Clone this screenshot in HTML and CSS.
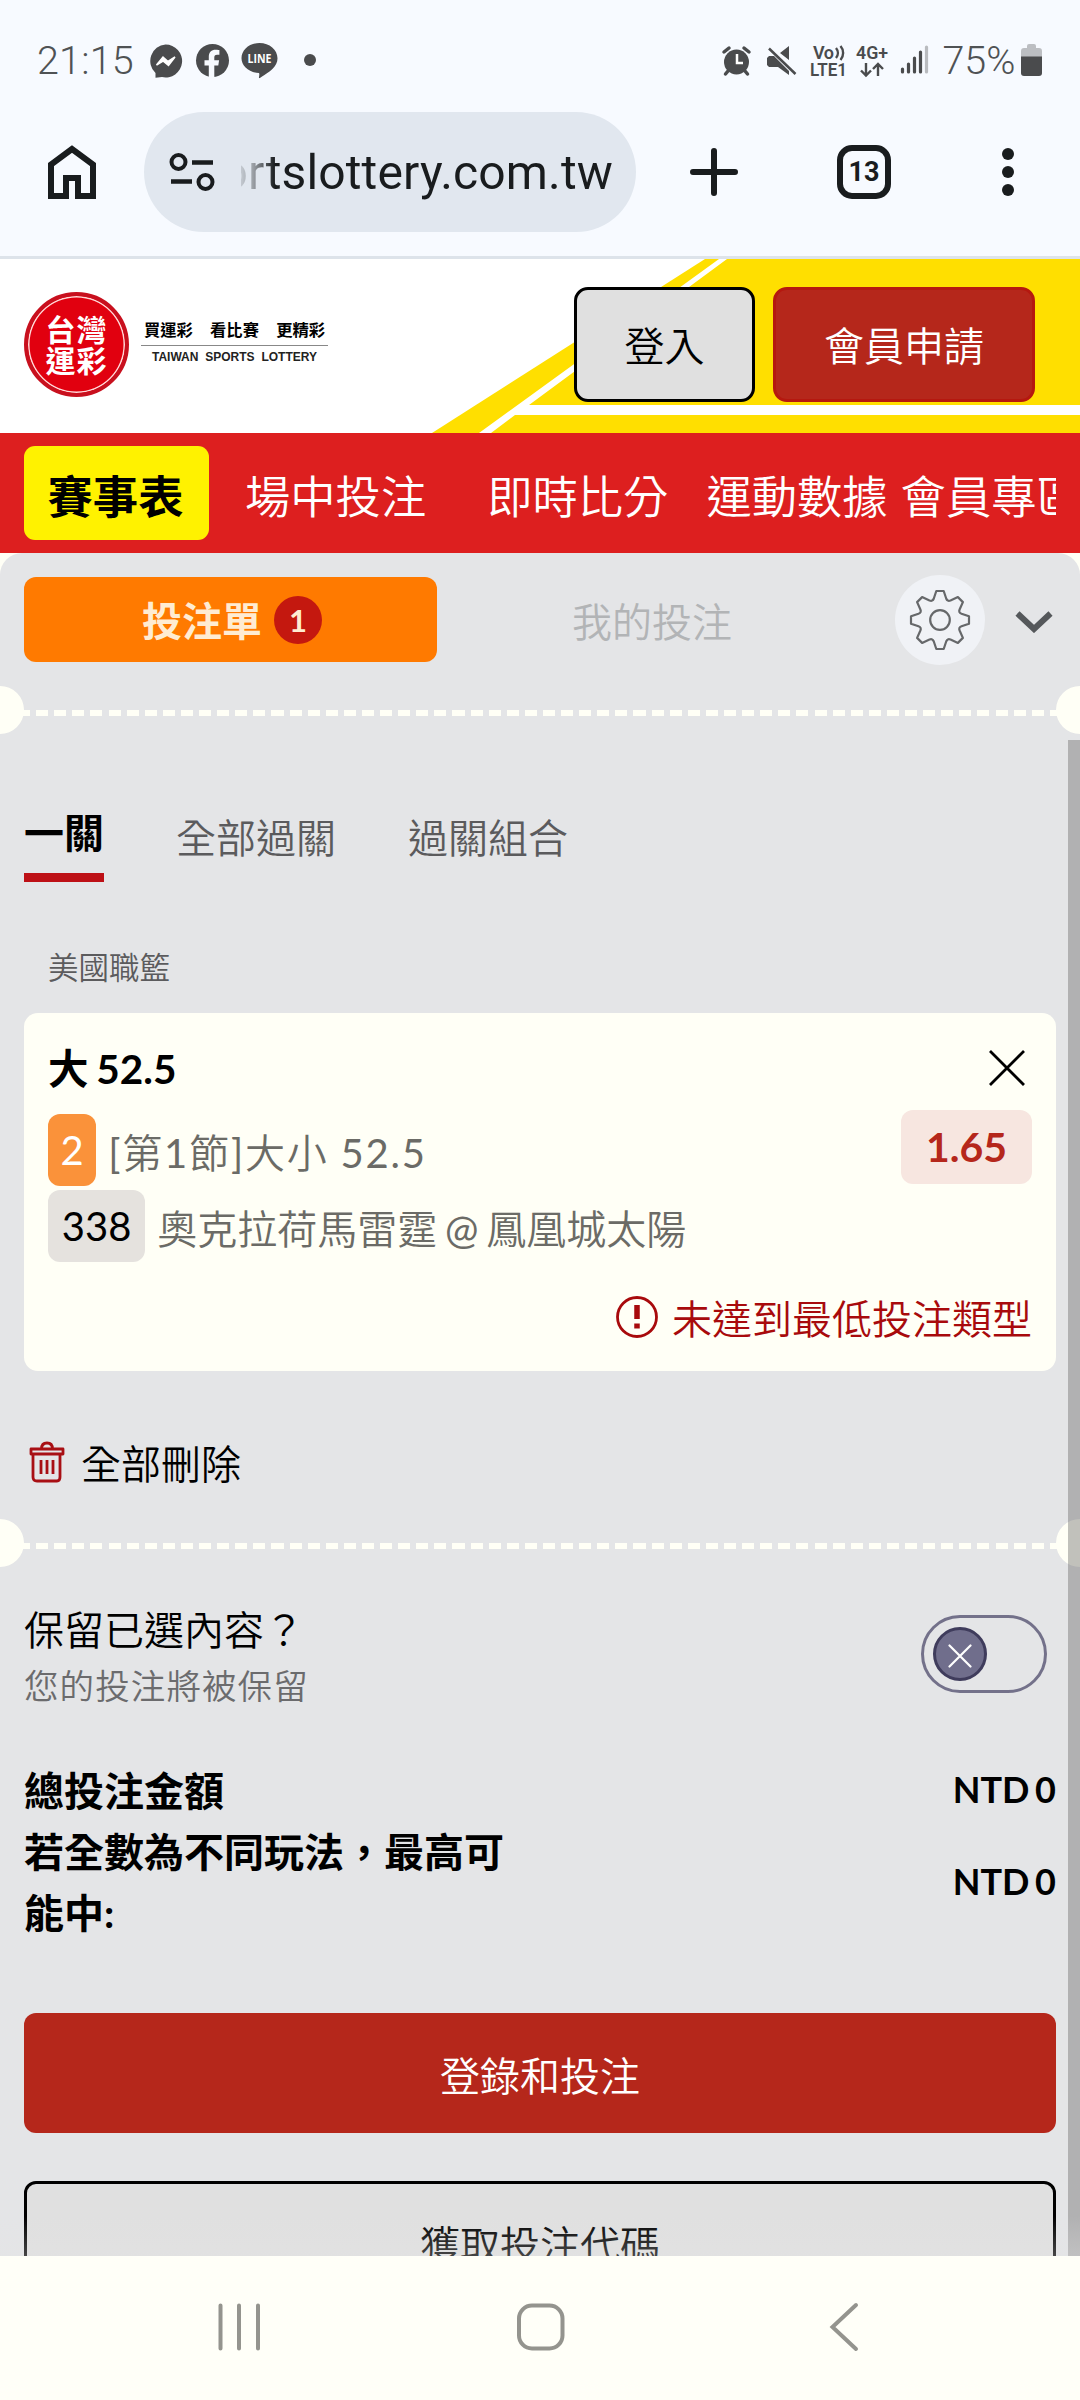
FILE: index.html
```html
<!DOCTYPE html>
<html lang="zh-Hant">
<head>
<meta charset="utf-8">
<title>台灣運彩</title>
<link rel="stylesheet" href="styles.css">
</head>
<body>
<div class="status">
  <span class="clock">21:15</span>
  <svg class="app-icons" width="180" height="40" viewBox="145 40 180 40">
    <g fill="#4a4b4d">
      <path d="M166.500 44.500a16.500 16.500 0 1 1-3.500 32.600l-6.500.6v-4.700a16.500 16.500 0 0 1 10-28.500z"/>
      <circle cx="213.500" cy="60.500" r="16.500"/>
      <path d="M260.500 43c10 0 18 6.800 18 15.200 0 4-1.800 7.400-4.600 10.300-4 4-10.400 7.700-13 9.500-1.300.5-1-.5-.8-1.500.2-1.300.5-3-.2-3.400-9.800-.8-17.400-7-17.400-14.900 0-8.400 8-15.200 18-15.200z"/>
      <circle cx="311" cy="60" r="6"/>
    </g>
    <path d="M157.500 65l6.500-8 5 4.500 7-4.500-6.500 8.500-5.500-4.500z" fill="#fff" stroke="#fff" stroke-width="1.500"/>
    <path d="M209.800 78V65.500h-4.300v-5.200h4.300v-3.500c0-4.600 2.700-7 6.800-7 2 0 3.800.3 3.800.3v4.600h-2.300c-2.200 0-2.800 1.300-2.800 2.700v2.900h4.800l-.8 5.200h-4V78z" fill="#f7faff"/>
    <text x="260.500" y="63" class="line-text" textLength="24" lengthAdjust="spacingAndGlyphs">LINE</text>
  </svg>
  <svg class="signal-icons" width="212" height="40" viewBox="720 40 212 40">
    <g fill="#4a4b4d">
      <circle cx="737.500" cy="62" r="12.500"/>
      <g stroke="#4a4b4d" stroke-width="3.500" stroke-linecap="round" fill="none">
        <path d="M725 52l5-4M745 48l5 4M729 71l-2.500 3M746 71l2.500 3"/>
      </g>
      <path d="M768 58l2-2h5l15 15v4l-11-8h-9l-2-2zM781 53l9-7v14z"/>
      <path d="M770 48.500l26.500 25.500" stroke="#4a4b4d" stroke-width="2.500"/>
    </g>
    <path d="M738 54v9h6" fill="none" stroke="#fff" stroke-width="2.500"/>
    <g class="net-text">
      <text x="814" y="58.500" textLength="21">Vo</text>
      <text x="811" y="75.500" textLength="37" lengthAdjust="spacingAndGlyphs">LTE1</text>
      <text x="857" y="58.500" textLength="32" lengthAdjust="spacingAndGlyphs">4G+</text>
    </g>
    <g fill="none" stroke="#4a4b4d" stroke-width="2.400">
      <path d="M837 48c2.500 3 2.500 7 0 10M841.500 46c3.500 4 3.500 10 0 14M867 63v12M862 70.500l5 5 5-5M879 76V64M874 69l5-5 5 5"/>
    </g>
    <g stroke="#4a4b4d" stroke-width="3.200" stroke-linecap="round">
      <path d="M903.500 69v3M909.500 64v8M915.500 58v14M921.500 52v20"/>
      <path d="M927.500 47v25" stroke="#b9bbbf"/>
    </g>
  </svg>
  <span class="percent">75%</span>
  <svg class="battery" width="22" height="32" viewBox="0 0 22 32">
    <path d="M6 2q0-2 2-2h5q2 0 2 2v2h3q3 0 3 3v6H0V7q0-3 3-3h3z" fill="#bcbec2"/>
    <path d="M0 12.500h21V29q0 3-3 3H3q-3 0-3-3z" fill="#4a4b4d"/>
  </svg>
</div>

<div class="toolbar">
  <svg class="home" width="48" height="54" viewBox="0 0 48 54"><path d="M24 4L3 19.500V51h15V33h12v18h15V19.500zM18 51h3M27 51h3" fill="none" stroke="#191c1e" stroke-width="6"/></svg>
  <div class="url">
    <svg width="46" height="40" viewBox="169 152 46 40"><g fill="none" stroke="#191c1e"><circle cx="178.500" cy="162" r="7" stroke-width="4"/><circle cx="205.500" cy="182" r="7" stroke-width="4"/><path d="M192 162.500h21M171 181.500h21" stroke-width="4.500"/></g></svg>
    <div class="url-clip"><span class="url-text">ortslottery.com.tw</span></div>
  </div>
  <svg class="plus" width="48" height="48" viewBox="0 0 48 48"><path d="M24 3v42M3 24h42" stroke="#191c1e" stroke-width="6" stroke-linecap="round"/></svg>
  <div class="tab-count">13</div>
  <svg class="kebab" width="12" height="48" viewBox="0 0 12 48"><g fill="#191c1e"><circle cx="6" cy="6" r="6"/><circle cx="6" cy="24" r="6"/><circle cx="6" cy="42" r="6"/></g></svg>
</div>

<header class="brand">
  <svg class="brand-bg" width="1080" height="174" viewBox="0 259 1080 174">
    <path d="M432 433L705 259H1080V433z" fill="#ffdf00"/>
    <path d="M479 433L719 259H727L529 405H1080V415H515L491 433z" fill="#fff"/>
  </svg>
  <div class="seal"><div class="seal-text"><span>台灣</span><span>運彩</span></div></div>
  <div class="slogan">
    <div class="slogan-zh"><span>買運彩</span><span>看比賽</span><span>更精彩</span></div>
    <div class="slogan-en">TAIWAN SPORTS LOTTERY</div>
  </div>
  <div class="brand-actions">
    <div class="btn-login">登入</div>
    <div class="btn-join">會員申請</div>
  </div>
</header>

<nav class="nav">
  <div class="nav-clip">
    <span class="nav-active">賽事表</span><span class="nav-a">場中投注</span><span class="nav-b">即時比分</span><span class="nav-c">運動數據</span><span class="nav-d">會員專區</span>
  </div>
</nav>

<main class="stage">
  <div class="panel">
    <div class="slip-head">
      <div class="slip-tab">投注單<span class="badge">1</span></div>
      <div class="my-bets">我的投注</div>
      <div class="gear">
        <svg width="64" height="64" viewBox="-32 -32 64 64"><g fill="none" stroke="#66686a" stroke-width="2.200" stroke-linejoin="round"><circle r="9.800"/>
        <path d="M-3.700-29H3.700L6.200-21.500Q7.400-18.300 10.500-19.600L17.900-22.900 22.900-17.900 19.600-10.500Q18.300-7.400 21.500-6.200L29-3.700V3.700L21.500 6.200Q18.300 7.400 19.600 10.500L22.900 17.900 17.900 22.900 10.500 19.600Q7.400 18.300 6.200 21.500L3.700 29H-3.700L-6.200 21.500Q-7.400 18.300-10.500 19.600L-17.900 22.900-22.900 17.900-19.600 10.500Q-18.300 7.400-21.500 6.200L-29 3.700V-3.700L-21.500-6.200Q-18.300-7.400-19.600-10.500L-22.900-17.900-17.900-22.900-10.500-19.600Q-7.400-18.300-6.200-21.500z"/></g></svg>
      </div>
      <svg class="chevron" width="38" height="22" viewBox="0 0 38 22"><path d="M2.500 2.500L19 18 35.500 2.500" fill="none" stroke="#55585b" stroke-width="6"/></svg>
    </div>

    <div class="tear"></div>

    <div class="tabs"><span class="tab-on">一關</span><span class="tab">全部過關</span><span class="tab">過關組合</span></div>
    <div class="league">美國職籃</div>

    <section class="card">
      <div class="card-main">
        <div class="pick">大 52.5</div>
        <div class="row"><span class="tag tag-orange">2</span><span class="market"><span class="num">[</span>第<span class="num">1</span>節<span class="num">]</span>大小<span class="num"> 52.5</span></span></div>
        <div class="row row-2"><span class="tag tag-gray">338</span><span class="match">奧克拉荷馬雷霆<span class="num"> @ </span>鳳凰城太陽</span></div>
      </div>
      <div class="card-side">
        <svg class="close" width="38" height="38" viewBox="0 0 38 38"><path d="M2 2l34 34M36 2L2 36" stroke="#000" stroke-width="2.800"/></svg>
        <div class="odds">1.65</div>
      </div>
      <div class="warn">
        <svg width="44" height="44" viewBox="0 0 44 44"><circle cx="22" cy="22" r="19.500" fill="none" stroke="#a80a0c" stroke-width="2.800"/><path d="M22 10v14M22 28.500v5" stroke="#a80a0c" stroke-width="5.500"/></svg>
        <span>未達到最低投注類型</span>
      </div>
    </section>

    <div class="clear">
      <svg width="36" height="42" viewBox="0 0 36 42"><g fill="none" stroke="#a80f14" stroke-width="2.800" stroke-linejoin="round"><path d="M2 8h32v5H2zM12.500 8Q12.500 2 18 2T23.500 8M4 13v23q0 4 4 4h20q3 0 3-4V13M12 19v14M18 19v14M24 19v14"/></g></svg>
      <span>全部刪除</span>
    </div>

    <div class="tear"></div>

    <div class="keep">
      <div class="keep-text"><div class="keep-title">保留已選內容？</div><div class="keep-note">您的投注將被保留</div></div>
      <div class="toggle"><div class="knob"><svg width="24" height="24" viewBox="0 0 24 24"><path d="M1.500 1.500l21 21M22.500 1.500l-21 21" stroke="#fff" stroke-width="2.200" stroke-linecap="round"/></svg></div></div>
    </div>

    <div class="sum"><div class="sum-label">總投注金額</div><div class="sum-value">NTD 0</div></div>
    <div class="sum"><div class="sum-label">若全數為不同玩法，最高可能中:</div><div class="sum-value">NTD 0</div></div>

    <div class="btn-bet">登錄和投注</div>
    <div class="btn-code">獲取投注代碼</div>
    <div class="scrollbar"></div>
    <div class="fade"></div>
  </div>
</main>

<footer class="sysnav">
  <svg width="1080" height="144" viewBox="0 2256 1080 144"><g fill="none" stroke="#94948e" stroke-width="4" stroke-linecap="round"><path d="M220.500 2305.500v43M239 2305.500v43M258 2305.500v43"/><rect x="519" y="2305.500" width="43.500" height="43" rx="13"/><path d="M856 2305l-23.500 22 23.500 22"/></g></svg>
</footer>
</body>
</html>
```
FILE: styles.css
```css
* { box-sizing: border-box; }
body { margin: 0; width: 1080px; height: 2400px; overflow: hidden; background: #fffff6; color: #000; font-family: Lato, "Noto Sans CJK TC", sans-serif; font-size: 40px; font-weight: 350; white-space: nowrap; }
svg { display: block; flex: none; }

.status { height: 112px; background: #f7faff; display: flex; align-items: flex-start; padding: 0 37px; font-family: Roboto, sans-serif; color: #4f5254; }
.clock, .percent { font-size: 39.5px; line-height: 46px; margin-top: 38px; }
.clock { width: 108px; letter-spacing: 0.2px; }
.app-icons { margin-top: 40px; }
.line-text { font: 700 11.5px "Open Sans", sans-serif; fill: #fff; text-anchor: middle; }
.signal-icons { margin: 40px 0 0 395px; }
.net-text { font: 600 18px Roboto, sans-serif; fill: #4a4b4d; }
.percent { width: 90px; padding-left: 11px; }
.battery { margin-top: 44px; }

.toolbar { height: 147px; background: #f7faff; border-bottom: 3px solid #dde3ea; display: flex; align-items: flex-start; padding-left: 48px; }
.home { margin-top: 33px; }
.url { margin-left: 48px; width: 492px; height: 120px; border-radius: 60px; background: #e1e7ef; display: flex; align-items: center; padding-left: 25px; }
.url-clip { margin-left: 26px; width: 375px; height: 80px; overflow: hidden; display: flex; justify-content: flex-end; -webkit-mask-image: linear-gradient(90deg, rgba(0,0,0,0.15) 0, rgba(0,0,0,0.35) 12px, #000 34px); mask-image: linear-gradient(90deg, rgba(0,0,0,0.15) 0, rgba(0,0,0,0.35) 12px, #000 34px); }
.url-text { font: 400 48px/82px Roboto, sans-serif; color: #191c1e; letter-spacing: 0.150px; margin-right: 3px; }
.plus { margin: 36px 0 0 54px; }
.tab-count { margin: 33px 0 0 99px; width: 54px; height: 54px; border: 6px solid #191c1e; border-radius: 15px; font: 700 27px/42px Roboto, sans-serif; text-align: center; color: #191c1e; }
.kebab { margin: 36px 0 0 111px; }

.brand { position: relative; height: 174px; background: #fff; display: flex; align-items: flex-start; }
.brand-bg { position: absolute; left: 0; top: 0; }
.seal { position: relative; margin: 33px 0 0 24px; width: 105px; height: 105px; border-radius: 50%; background: #e1000f; border: 4px solid #c8101e; display: flex; align-items: center; justify-content: center; box-shadow: inset 0 0 0 1.500px #ffd9d9; }
.seal-text { font: 700 30px/30px Lato, "Noto Sans CJK TC", sans-serif; letter-spacing: 1px; color: #fff; display: flex; flex-direction: column; gap: 1px; }
.seal-text span { height: 30px; }
.slogan { position: relative; margin: 60px 0 0 12px; width: 187px; }
.slogan-zh { display: flex; justify-content: space-between; padding: 0 3px; height: 27px; border-bottom: 1.500px solid #888; font-size: 16.300px; font-weight: 700; line-height: 22px; }
.slogan-en { font: 700 12px/22px "Liberation Sans", sans-serif; text-align: center; color: #222; word-spacing: 3.500px; }
.brand-actions { position: relative; display: flex; gap: 18px; margin: 28px 0 0 246px; line-height: 113px; text-align: center; }
.btn-login { width: 181px; height: 115px; border: 3px solid #000; border-radius: 14px; background: #e0e0e0; }
.btn-join { width: 262px; height: 115px; border: 3px solid #b5180f; border-radius: 14px; background: #b5271b; color: #fff; }

.nav { height: 120px; background: #dd1f1f; padding: 13px 24px; color: #fff; font-size: 45.3px; }
.nav-clip { display: flex; overflow: hidden; height: 94px; line-height: 102px; }
.nav-clip span { flex: none; }
.nav-active { width: 185px; height: 94px; border-radius: 11px; background: #fff200; color: #000; font-weight: 700; text-align: center; padding-right: 2px; }
.nav-a { margin-left: 36px; }
.nav-b { margin-left: 61px; }
.nav-c { margin-left: 38px; }
.nav-d { margin-left: 13px; }

.stage { height: 1703px; overflow: hidden; }
.panel { position: relative; height: 1860px; background: #e4e5e7; border-radius: 22px 22px 0 0; }
.slip-head { display: flex; height: 133px; align-items: flex-start; padding: 22px 27px 0 24px; }
.slip-tab { width: 413px; height: 85px; margin-top: 2px; border-radius: 12px; background: #ff7a00; color: #ffecd2; font-weight: 700; display: flex; align-items: center; justify-content: center; line-height: 89px; padding: 4px 0 0 3px; }
.badge { width: 48px; height: 48px; margin: -4px 0 0 12px; border-radius: 50%; background: #c4180f; font-size: 31px; line-height: 48px; text-align: center; }
.my-bets { width: 458px; padding-left: 135px; line-height: 94px; color: #b2b4b6; }
.gear { width: 90px; height: 90px; border-radius: 50%; background: #f0f2f6; display: flex; align-items: center; justify-content: center; }
.chevron { margin: 36px 0 0 30px; }

.tear { position: relative; height: 48px; overflow: hidden; background: repeating-linear-gradient(90deg, #fffff6 0 12px, transparent 12px 18.100px) 0 24px / 100% 6px no-repeat; }
.tear::before, .tear::after { content: ""; position: absolute; top: 0; width: 48px; height: 48px; border-radius: 50%; background: #fffff6; }
.tear::before { left: -24px; }
.tear::after { right: -24px; }

.tabs { display: flex; gap: 72px; padding: 74px 24px 0; height: 182px; color: #5b5b5d; line-height: 60px; }
.tab-on { height: 74px; border-bottom: 9px solid #bd1016; color: #000; font-weight: 700; line-height: 51px; }
.league { padding-left: 48px; margin-top: 26px; height: 71px; font-size: 30.500px; line-height: 50px; color: #5b5b5d; }

.card { margin: 0 24px; height: 358px; border-radius: 14px; background: #fffff6; padding: 0 24px; display: grid; grid-template: 249px 109px / 1fr auto; }
.pick { margin-top: 31px; height: 70px; line-height: 50px; font-weight: 700; font-size: 40.5px; word-spacing: -2px; }
.row { display: flex; align-items: center; gap: 12px; height: 72px; color: #6b6b66; }
.row-2 { margin-top: 4px; }
.num { font-weight: 400; }
.tag { border-radius: 12px; height: 72px; padding: 0 12.500px; line-height: 72px; font-weight: 400; }
.tag-orange { background: #fa923a; color: #fff; }
.tag-gray { background: #e5e2de; color: #000; padding: 0 13.800px; }
.market { letter-spacing: 1.800px; line-height: 78px; height: 72px; }
.match { line-height: 78px; height: 72px; word-spacing: -2.500px; }
.card-side { display: flex; flex-direction: column; align-items: flex-end; }
.close { margin: 36px 6px 0 0; }
.odds { margin-top: 23px; width: 131px; height: 74px; border-radius: 12px; background: #f7e6e0; color: #b5271b; font-weight: 700; font-size: 41px; line-height: 74px; text-align: center; }
.warn { grid-column: 1 / 3; display: flex; justify-content: flex-end; gap: 13px; color: #a80a0c; padding-top: 33px; line-height: 48px; }

.clear { display: flex; gap: 16px; padding: 70px 0 0 29px; height: 148px; line-height: 46px; }

.keep { display: flex; justify-content: space-between; padding: 33px 33px 0 24px; height: 194px; }
.keep-title { line-height: 60px; }
.keep-note { font-size: 34.500px; letter-spacing: 1.100px; line-height: 52px; color: #6b6b6d; }
.toggle { width: 126px; height: 78px; margin-top: 15px; border: 3px solid #73718a; border-radius: 39px; padding: 9px; }
.knob { width: 54px; height: 54px; border-radius: 50%; background: #706e8c; border: 3px solid #3f3c5c; display: flex; align-items: center; justify-content: center; padding-top: 3px; }

.sum { display: flex; justify-content: space-between; align-items: center; padding: 0 24px; font-weight: 700; line-height: 61px; }
.sum-label { width: 484px; white-space: normal; }
.sum-value { font-size: 36px; word-spacing: -3px; height: 61px; line-height: 57px; }

.btn-bet { margin: 69px 24px 0; height: 120px; border-radius: 12px; background: #b5271b; color: #fff; text-align: center; line-height: 126px; }
.btn-code { margin: 48px 24px 0; height: 120px; border: 3px solid #000; border-radius: 12px; background: #e0e0e0; text-align: center; line-height: 122px; }
.scrollbar { position: absolute; right: 0; top: 187px; width: 12px; height: 1600px; background: rgba(100, 100, 100, 0.4); }
.fade { position: absolute; left: 0; right: 0; top: 1663px; height: 40px; background: linear-gradient(rgba(228, 228, 228, 0), rgba(228, 228, 228, 0.3)); }

.sysnav { height: 144px; background: #fffff8; }
```
